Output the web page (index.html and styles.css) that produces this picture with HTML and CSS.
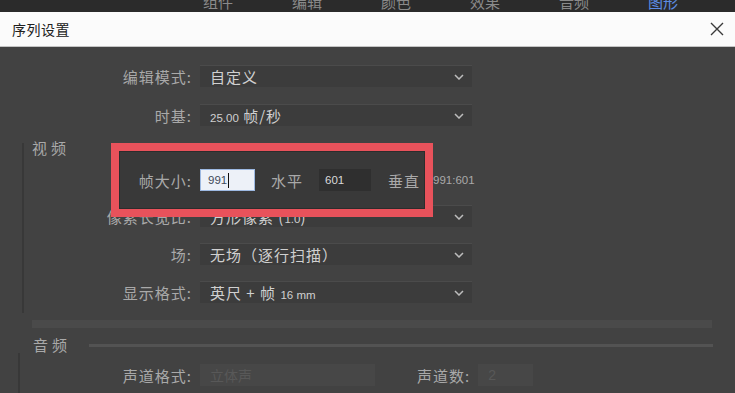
FILE: index.html
```html
<!DOCTYPE html>
<html lang="zh-CN">
<head>
<meta charset="utf-8">
<title>序列设置</title>
<link rel="stylesheet" href="styles.css">
</head>
<body>
<div class="app">
  <nav class="topbar">
    <span class="tab">组件</span>
    <span class="tab">编辑</span>
    <span class="tab">颜色</span>
    <span class="tab">效果</span>
    <span class="tab">音频</span>
    <span class="tab active">图形</span>
  </nav>
  <header class="titlebar">
    <span class="title">序列设置</span>
    <svg class="close" viewBox="0 0 14 14"><path d="M1 1L13 13M13 1L1 13"/></svg>
  </header>
  <main class="panel">
    <div class="row row-first">
      <span class="label">编辑模式:</span>
      <div class="select"><span class="val">自定义</span><svg class="chev" viewBox="0 0 10 6"><path d="M1 1L5 5L9 1"/></svg></div>
    </div>
    <div class="row row-second">
      <span class="label">时基:</span>
      <div class="select"><span class="val"><span class="num">25.00</span> 帧/秒</span><svg class="chev" viewBox="0 0 10 6"><path d="M1 1L5 5L9 1"/></svg></div>
    </div>

    <section class="group video">
      <div class="group-title">视频</div>
      <div class="group-body">
        <div class="frame-row">
          <span class="flabel">帧大小:</span>
          <div class="input light"><span class="num dark">991</span><span class="caret"></span></div>
          <span class="unit">水平</span>
          <div class="input deep"><span class="num">601</span></div>
          <span class="unit unit-v">垂直</span>
          <span class="ratio num">991:601</span>
        </div>
        <div class="row row-pixel">
          <span class="label glabel">像素长宽比:</span>
          <div class="select"><span class="val">方形像素 (<span class="num">1.0</span>)</span><svg class="chev" viewBox="0 0 10 6"><path d="M1 1L5 5L9 1"/></svg></div>
        </div>
        <div class="row row-field">
          <span class="label glabel">场:</span>
          <div class="select"><span class="val">无场（逐行扫描）</span><svg class="chev" viewBox="0 0 10 6"><path d="M1 1L5 5L9 1"/></svg></div>
        </div>
        <div class="row row-display">
          <span class="label glabel">显示格式:</span>
          <div class="select"><span class="val">英尺 + 帧 <span class="num">16 mm</span></span><svg class="chev" viewBox="0 0 10 6"><path d="M1 1L5 5L9 1"/></svg></div>
        </div>
      </div>
    </section>

    <div class="band"></div>

    <section class="group audio">
      <div class="audio-head"><span class="group-title2">音频</span><span class="rule"></span></div>
      <div class="audio-body">
        <div class="row">
          <span class="label alabel">声道格式:</span>
          <div class="dim wide"><span class="dimval">立体声</span></div>
          <span class="label chlabel">声道数:</span>
          <div class="dim narrow"><span class="dimval num">2</span></div>
        </div>
      </div>
    </section>
  </main>
</div>
</body>
</html>
```

FILE: styles.css
```css
* { box-sizing: border-box; margin: 0; padding: 0; }
html, body { width: 735px; height: 393px; overflow: hidden; background: #424242; }
body { font-family: "Noto Sans CJK SC", "Noto Sans", sans-serif; }
.app { width: 735px; height: 393px; overflow: hidden; }

.topbar { height: 12px; background: #2b2b2b; overflow: hidden; display: flex; padding-left: 203px; gap: 59px; }
.tab { font-size: 15px; line-height: 15px; margin-top: -6px; color: #8a8a8a; white-space: nowrap; }
.tab.active { color: #5d8de4; }

.titlebar { height: 35px; background: #fbfbfb; border-bottom: 1px solid #c4c4c4; display: flex; align-items: center; justify-content: space-between; padding: 0 11px 0 12px; }
.title { font-size: 14px; color: #202020; letter-spacing: 0.5px; }
.close { width: 14px; height: 14px; stroke: #3a3a3a; stroke-width: 1.4; fill: none; }

.panel { padding-top: 18px; }
.row { display: flex; align-items: center; height: 22px; }
.row-second { margin-top: 17px; }
.label { width: 192px; flex-shrink: 0; text-align: right; font-size: 15px; letter-spacing: 1px; color: #a9a9a9; white-space: nowrap; }
.select { margin-left: 8px; width: 272px; height: 22px; background: #3c3c3c; border-top: 1px solid #4b4b4b; display: flex; align-items: center; justify-content: space-between; padding: 0 8px 0 10px; }
.val { font-size: 15px; letter-spacing: 1px; color: #d0d0d0; white-space: nowrap; }
.num { font-family: "Liberation Sans", Arial, sans-serif; font-size: 11.5px; letter-spacing: 0; }
.chev { width: 10px; height: 6px; fill: none; stroke: #bdbdbd; stroke-width: 1.5; }

.group.video { margin-top: 13px; }
.group-title { height: 14px; line-height: 18px; padding-left: 32px; font-size: 15px; letter-spacing: 4px; color: #a9a9a9; }
.group-body { margin-left: 22px; border-left: 2px solid #383838; padding-bottom: 10px; }
.glabel { width: 168px; }

.frame-row { position: relative; z-index: 1; margin-top: -10px; margin-left: 87px; width: 322px; height: 74px; border: 8px solid #e8525b; background: #393939; box-shadow: inset 0 0 0 1px #2c2c2c; display: flex; align-items: center; }
.flabel { width: 73px; flex-shrink: 0; text-align: right; font-size: 15px; letter-spacing: 1px; color: #a9a9a9; white-space: nowrap; }
.input { flex-shrink: 0; height: 22px; display: flex; align-items: center; padding-left: 7px; }
.input.light { margin-left: 8px; width: 55px; background: #edf1f8; border: 1px solid #9db9e2; }
.input.deep { margin-left: 16px; width: 52px; background: #2f2f2f; padding-left: 6px; }
.input .num { color: #dadada; }
.input .num.dark { color: #404a5a; }
.caret { width: 1px; height: 15px; background: #111; margin-left: 1px; }
.unit { flex-shrink: 0; margin-left: 16px; font-size: 15px; letter-spacing: 1px; color: #a9a9a9; white-space: nowrap; }
.unit-v { margin-left: 17px; }
.ratio { flex-shrink: 0; margin-left: 13px; color: #a9a9a9; white-space: nowrap; }

.row-pixel { margin-top: -12px; }
.row-field { margin-top: 16px; }
.row-display { margin-top: 16px; }

.band { margin: 7px 0 0 32px; width: 680px; height: 8px; background: #4a4a4a; }

.audio-head { margin-top: 9px; height: 16px; display: flex; align-items: center; }
.group-title2 { padding-left: 33px; font-size: 15px; letter-spacing: 4px; color: #a9a9a9; line-height: 16px; }
.rule { margin-left: 18px; width: 624px; height: 3px; background: #535353; }
.audio-body { margin-left: 18px; border-left: 2px solid #383838; padding-top: 11px; height: 60px; }
.alabel { width: 172px; }
.chlabel { width: auto; margin-left: 42px; }
.dim { margin-left: 8px; height: 22px; background: #474747; display: flex; align-items: center; padding-left: 10px; }
.dim.wide { width: 175px; }
.dim.narrow { width: 55px; }
.dimval { font-size: 14px; color: #585858; }
```
